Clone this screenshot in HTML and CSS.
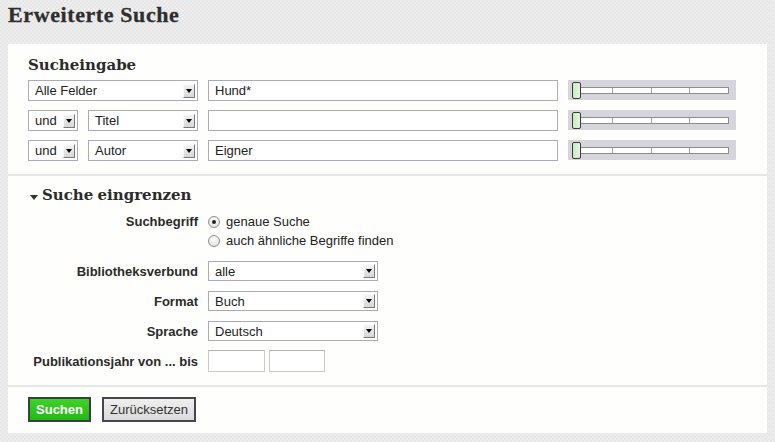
FILE: index.html
```html
<!DOCTYPE html>
<html lang="de">
<head>
<meta charset="utf-8">
<title>Erweiterte Suche</title>
<link rel="stylesheet" href="styles.css">
</head>
<body>
<h1 class="page-title">Erweiterte Suche</h1>
<div class="panel">
  <section class="sec sec-input">
    <h2 class="sec-title">Sucheingabe</h2>
    <div class="qrow">
      <div class="select w170"><span class="sel-text">Alle Felder</span><span class="arrow"></span></div>
      <div class="textbox">Hund*</div>
      <div class="slider"><div class="track"><i></i><i></i><i></i><i></i></div><span class="thumb"></span></div>
    </div>
    <div class="qrow">
      <div class="select w50"><span class="sel-text">und</span><span class="arrow"></span></div>
      <div class="select w110"><span class="sel-text">Titel</span><span class="arrow"></span></div>
      <div class="textbox"></div>
      <div class="slider"><div class="track"><i></i><i></i><i></i><i></i></div><span class="thumb"></span></div>
    </div>
    <div class="qrow">
      <div class="select w50"><span class="sel-text">und</span><span class="arrow"></span></div>
      <div class="select w110"><span class="sel-text">Autor</span><span class="arrow"></span></div>
      <div class="textbox">Eigner</div>
      <div class="slider"><div class="track"><i></i><i></i><i></i><i></i></div><span class="thumb"></span></div>
    </div>
  </section>
  <section class="sec sec-filter">
    <h2 class="sec-title toggle"><span class="caret"></span>Suche eingrenzen</h2>
    <div class="frow radio-row">
      <div class="flabel">Suchbegriff</div>
      <div class="radios">
        <div class="radio-line"><span class="radio checked"></span>genaue Suche</div>
        <div class="radio-line"><span class="radio"></span>auch ähnliche Begriffe finden</div>
      </div>
    </div>
    <div class="frow first-sel">
      <div class="flabel">Bibliotheksverbund</div>
      <div class="select w170 small"><span class="sel-text">alle</span><span class="arrow"></span></div>
    </div>
    <div class="frow">
      <div class="flabel">Format</div>
      <div class="select w170 small"><span class="sel-text">Buch</span><span class="arrow"></span></div>
    </div>
    <div class="frow">
      <div class="flabel">Sprache</div>
      <div class="select w170 small"><span class="sel-text">Deutsch</span><span class="arrow"></span></div>
    </div>
    <div class="frow year-row">
      <div class="flabel">Publikationsjahr von ... bis</div>
      <div class="years"><div class="yearbox y1"></div><div class="yearbox y2"></div></div>
    </div>
  </section>
  <section class="sec sec-buttons">
    <button class="btn btn-go">Suchen</button>
    <button class="btn btn-reset">Zurücksetzen</button>
  </section>
</div>
</body>
</html>
```
FILE: styles.css
```css
* { box-sizing: border-box; }
html, body { height: 100%; }
body {
  margin: 0;
  padding: 0 8px;
  background-color: #ebebeb;
  background-image: repeating-conic-gradient(#e6e6e6 0% 25%, #eeeeee 0% 50%);
  background-size: 4px 4px;
  font-family: "Liberation Sans", Arial, sans-serif;
  font-size: 13px;
  color: #222;
}
.page-title {
  margin: 0;
  height: 44px;
  padding-top: 1px;
  font-family: "Liberation Serif", "Times New Roman", serif;
  font-weight: bold;
  font-size: 22px;
  line-height: 28px;
  letter-spacing: 0.6px;
  color: #2e2e2e;
  -webkit-text-stroke: 0.3px #2e2e2e;
}
.panel {
  background: #fefefd;
}
.sec { padding: 0 20px; }
.sec-input { padding-top: 11px; padding-bottom: 13px; border-bottom: 2px solid #e6e6e6; }
.sec-filter { padding-top: 9px; padding-bottom: 13px; border-bottom: 2px solid #e6e6e6; }
.sec-buttons { padding-top: 10px; padding-bottom: 11px; display: flex; gap: 11px; }
.sec-title {
  margin: 0;
  font-family: "DejaVu Serif", Georgia, serif;
  font-weight: bold;
  font-size: 15px;
  line-height: 20px;
  word-spacing: -1px;
  color: #2b2b2b;
}
.toggle { display: flex; align-items: center; }
.caret {
  width: 0; height: 0;
  margin: 4px 4px 0 2px;
  border-left: 4.5px solid transparent;
  border-right: 4.5px solid transparent;
  border-top: 5px solid #333;
}
.qrow { display: flex; gap: 10px; height: 21px; margin-top: 9px; }
.qrow:first-of-type { margin-top: 5px; }
.select {
  display: flex;
  align-items: center;
  height: 21px;
  border: 1px solid #aaaab9;
  background: #fff;
  padding: 0 2px 0 6px;
  color: #222;
  font-size: 13px;
}
.select.small { height: 20px; }
.w170 { width: 170px; }
.w110 { width: 110px; }
.w50 { width: 50px; }
.sel-text { flex: 1; white-space: nowrap; }
.arrow {
  position: relative;
  width: 12px;
  height: 14px;
  background: linear-gradient(#f4f4f4, #d6d6d6);
  border-right: 1px solid #7a7a7a;
  border-bottom: 1px solid #7a7a7a;
  border-top: 1px solid #fafafa;
  border-left: 1px solid #fafafa;
}
.arrow::after {
  content: "";
  position: absolute;
  left: 2px; top: 4px;
  border-left: 3.5px solid transparent;
  border-right: 3.5px solid transparent;
  border-top: 4px solid #000;
}
.textbox {
  width: 350px;
  height: 21px;
  border: 1px solid #aaaab9;
  background: #fff;
  padding-left: 6px;
  line-height: 19px;
  font-size: 13px;
  color: #222;
}
.slider {
  position: relative;
  width: 168px;
  height: 20px;
  background: #d5d5db;
}
.track {
  position: absolute;
  left: 8px; top: 7px;
  width: 153px; height: 7px;
  display: flex;
  background: #fff;
  border: 1px solid #8c8c8c;
}
.track i { flex: 1; border-right: 1px solid #a0a0a0; }
.track i:first-child { flex: 0 0 36px; }
.track i:last-child { border-right: 0; }
.thumb {
  position: absolute;
  left: 4px; top: 2px;
  width: 9px; height: 17px;
  background: linear-gradient(90deg, #c9e8c3, #e3f6df);
  border: 1.5px solid #3a3a3a;
  border-radius: 2px;
}
.frow { display: flex; align-items: center; gap: 10px; margin-top: 10px; }
.radio-row { align-items: flex-start; margin-top: 7px; }
.first-sel { margin-top: 11px; }
.year-row { margin-top: 9px; }
.flabel {
  width: 170px;
  text-align: right;
  font-weight: bold;
  font-size: 13px;
  color: #2a2a2a;
  white-space: nowrap;
}
.radio-row .flabel { line-height: 19px; }
.radios { line-height: 19px; color: #222; }
.radio-line { display: flex; align-items: center; }
.radio {
  position: relative;
  width: 12px; height: 12px;
  margin-right: 6px;
  border-radius: 50%;
  border: 1px solid #8e8e8e;
  background: radial-gradient(circle at 50% 35%, #ffffff, #dcdcdc);
}
.radio.checked::after {
  content: "";
  position: absolute;
  left: 3px; top: 3px;
  width: 4px; height: 4px;
  border-radius: 50%;
  background: #222;
}
.years { display: flex; gap: 4px; }
.yearbox {
  height: 22px;
  border: 1px solid #c9c9c9;
  border-top-color: #b5b5b5;
  background: #fff;
}
.y1 { width: 57px; }
.y2 { width: 56px; }
.btn {
  height: 25px;
  margin: 0;
  border: 2px solid #454550;
  font-family: "Liberation Sans", Arial, sans-serif;
  font-size: 13px;
  padding: 0;
}
.btn-go {
  width: 63px;
  background: linear-gradient(#3fd22c, #22ba10);
  color: #fff;
  font-weight: bold;
  border-color: #3c3c44;
}
.btn-reset {
  width: 94px;
  background: linear-gradient(#efefef, #dadada);
  color: #333;
}
```
